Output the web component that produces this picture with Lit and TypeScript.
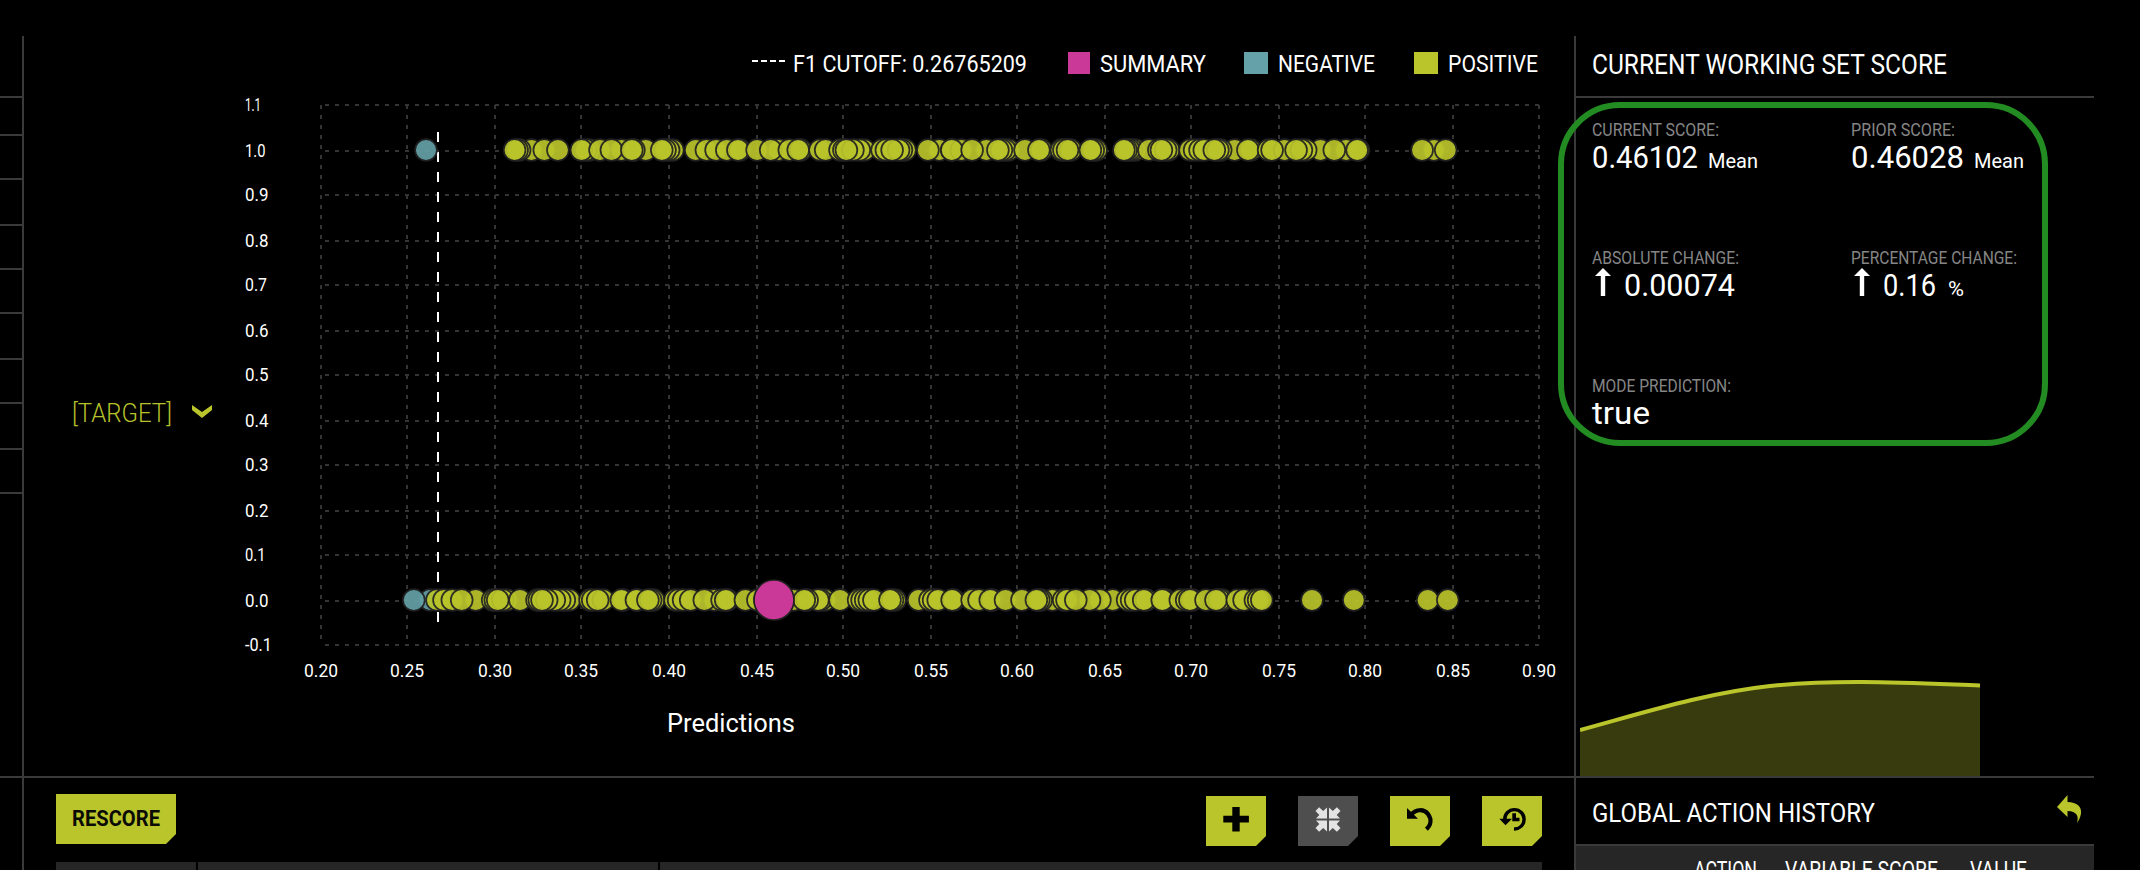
import { LitElement, html, svg, css } from "lit";
import { customElement } from "lit/decorators.js";

// Line of text condensed to an exact width; h is the cap height.
const line = (text: string, w: number, h: number, size: number, cls = "") => html`
  <svg class="line ${cls}" width=${w} height=${h}>
    <text x="-1" y=${h} font-size=${size} textLength=${w + 2} lengthAdjust="spacingAndGlyphs">${text}</text>
  </svg>`;

const COLS: [number, string][] = [
  [321, "0.20"], [407, "0.25"], [495, "0.30"], [581, "0.35"], [669, "0.40"],
  [757, "0.45"], [843, "0.50"], [931, "0.55"], [1017, "0.60"], [1105, "0.65"],
  [1191, "0.70"], [1279, "0.75"], [1365, "0.80"], [1453, "0.85"], [1539, "0.90"],
];
const ROWS: [number, string, number][] = [
  [105, "1.1", 16], [151, "1.0", 20.5], [195, "0.9", 23.5], [241, "0.8", 23.5],
  [285, "0.7", 22], [331, "0.6", 23.5], [375, "0.5", 23.5], [421, "0.4", 23.5],
  [465, "0.3", 23.5], [511, "0.2", 23.5], [555, "0.1", 20.5], [601, "0.0", 23.5],
  [645, "-0.1", 27],
];

// Marker centres, ordered back to front.
const at = (o: number, k: number, list: number[]) => list.map((v) => o + v / k);
const TOP = [
  ...at(400, 2.8, [368, 335, 328, 321, 404, 442, 530, 520, 508, 560, 620, 592, 688, 655, 649,
    764, 752, 742, 733, 828, 858, 885, 915, 952, 946, 1000, 1060, 1038, 1090, 1122, 1115,
    1176, 1192, 1300, 1286, 1232, 1243, 1268, 1250, 1350, 1362, 1414, 1404, 1396, 1378, 1510, 1478, 1545]),
  ...at(940, 2.8, [60, 33, 130, 90, 192, 182, 172, 162, 238, 284, 277, 340, 347, 366, 357, 437, 429, 421,
    547, 537, 529, 521, 515, 585, 613, 640, 632, 620, 700, 713, 728, 740, 825, 786, 778, 768, 870, 862, 920,
    965, 930, 1065, 1024, 1012, 997, 1137, 1104, 1172, 1168, 1383, 1350, 1416]),
];
const BOTTOM = [
  ...at(390, 3, [141, 162, 187, 257, 215, 308, 316, 350, 338, 323, 390, 441, 448, 538, 523, 509,
    493, 470, 456, 600, 608, 640, 623, 700, 694, 742]),
  ...at(390, 2.8, [690, 738, 730, 722, 798, 808, 822,
    842, 908, 880, 930, 945, 940, 995, 1030, 1050, 1100, 1130, 1218, 1205, 1198, 1168, 1160, 1260,
    1312, 1322, 1332, 1342, 1355, 1414, 1407, 1400, 1480, 1512, 1522, 1535]),
  ...at(940, 2.489, [34, 30, 80, 97, 130, 125, 163, 204, 280, 252, 246, 240, 308, 316, 430, 398,
    372, 338, 467, 477, 487, 514, 507, 562, 556, 553, 598, 614, 628, 622, 662, 703, 695, 687, 740,
    757, 785, 793, 801, 926, 1030, 1214, 1264]),
];

const dot = (x: number, y: number, cls = "pos", r = 10.9) =>
  svg`<circle class="dot ${cls}" cx=${x.toFixed(1)} cy=${y} r=${r}></circle>`;

@customElement("app-root")
export class AppRoot extends LitElement {
  static styles = css`
    :host { display: block; }
    * { box-sizing: border-box; }
    svg { display: block; flex: none; }
    .page {
      height: 870px; overflow: hidden; background: #000; color: #fff; padding-top: 36px;
      font-family: Roboto, "Liberation Sans", sans-serif;
      display: grid; grid-template-columns: 24px 1550px 520px;
      grid-template-rows: 740px 94px; align-content: start;
    }
    .line { overflow: visible; }
    text { fill: #fff; font-family: Roboto, "Liberation Sans", sans-serif; white-space: pre; }
    .dim text { fill: #858585; }
    .dark text { fill: #0b0b06; font-weight: 700; }
    .lime text { fill: #b7c22b; font-weight: 300; }
    .rail { border-right: 2px solid #3a3a3a; display: flex; flex-direction: column; }
    .rail i { border-bottom: 2px solid #3a3a3a; flex: none; display: block; }
    .foot { border-top: 2px solid #3a3a3a; }
    .upper { display: flex; flex-direction: column; }
    .legend { height: 52px; padding: 16px 37px 0 0; display: flex; justify-content: flex-end; gap: 40px; }
    .item { display: flex; align-items: center; gap: 11px; height: 22px; }
    .item.f1 { margin-right: 2px; }
    .item.sum { margin-right: -1px; }
    .swatch { width: 24px; height: 22px; background: #bac52b; }
    .swatch.sum { background: #ca3997; width: 22px; }
    .swatch.neg { background: #65a1a8; }
    .dash { stroke: #fff; stroke-width: 2; stroke-dasharray: 6 3; margin-bottom: 4px; margin-right: -2px; }
    .body { display: flex; }
    .target { width: 200px; height: 688px; padding: 316px 0 0 49px; display: flex; gap: 21px; }
    .chev { margin-top: 1px; fill: #bac52b; }
    .grid { stroke: #343434; stroke-width: 2; stroke-dasharray: 4 6; }
    .cut { stroke: #fff; stroke-width: 2; stroke-dasharray: 10 10; }
    .dot { stroke: #222; stroke-width: 1.7; opacity: 0.92; }
    .pos { fill: #bac52b; }
    .neg { fill: #65a1a8; }
    .mean { fill: #ca3997; opacity: 1; }
    .side { border-left: 2px solid #3a3a3a; position: relative; display: flex; flex-direction: column; }
    .head { height: 62px; flex: none; padding: 19px 0 0 17px; border-bottom: 2px solid #3a3a3a; }
    .scores { display: grid; grid-template-columns: 259px 259px; grid-auto-rows: 128px; padding: 26px 0 0 17px; }
    .cell { display: flex; flex-direction: column; gap: 9px; }
    .value { display: flex; align-items: flex-end; height: 23px; gap: 12px; }
    .value.delta { gap: 14px; padding-left: 2px; }
    .arrow { fill: #fff; }
    .ring { position: absolute; left: -18px; top: 66px; width: 490px; height: 344px; border: 6px solid #228b22; border-radius: 62px; }
    .area { margin: auto 0 -2px 4px; position: relative; }
    .fill { fill: #bac52b; opacity: 0.3; }
    .curve { fill: none; stroke: #bac52b; stroke-width: 4; }
    .tools { height: 84px; padding: 0 32px; display: flex; justify-content: space-between; }
    .btn {
      background: #bac52b; width: 60px; height: 50px; margin-top: 18px;
      clip-path: polygon(0 0, 100% 0, 100% 40px, calc(100% - 10px) 100%, 0 100%);
    }
    .btn.wide { width: 120px; margin-top: 16px; padding: 16px 0 0 17px; }
    .btn.off { background: #4e4e4e; }
    .group { display: flex; gap: 32px; }
    .table { display: flex; gap: 2px; padding: 0 32px; height: 8px; }
    .table b { background: #262626; width: 140px; }
    .table b + b { width: 460px; }
    .table b + b + b { width: 882px; }
    .hist { height: 68px; padding: 26px 12px 0 17px; display: flex; justify-content: space-between; border-bottom: 2px solid #3a3a3a; }
    .back { fill: #bac52b; margin-top: -9px; }
    .cols { height: 24px; background: #262626; padding: 15px 0 0 119px; display: flex; gap: 30px; overflow: hidden; }
    .cols .last { margin-left: 4px; }
    .white { fill: #e3e3e3; }
    .bend { fill: none; stroke: #000; }
  `;

  render() {
    const gaps = [60, 36, 42, 44, 42, 42, 44, 42, 44, 42];
    return html`
      <div class="page">
        <div class="rail">${gaps.map((g) => html`<i style="height:${g + 2}px"></i>`)}</div>
        <div class="upper">
          <div class="legend">
            <div class="item f1">
              <svg class="dash" width="33" height="2"><line x1="0" y1="1" x2="33" y2="1"></line></svg>
              ${line("F1 CUTOFF: 0.26765209", 232, 17, 23.8)}
            </div>
            <div class="item sum"><span class="swatch sum"></span>${line("SUMMARY", 104, 17, 23.8)}</div>
            <div class="item"><span class="swatch neg"></span>${line("NEGATIVE", 95, 17, 23.8)}</div>
            <div class="item"><span class="swatch"></span>${line("POSITIVE", 88, 17, 23.8)}</div>
          </div>
          <div class="body">
            <div class="target">
              ${line("[TARGET]", 98, 18, 25.5, "lime")}
              <svg class="chev" width="20" height="13"><path d="M0 0L10 7L20 0V5L10 13L0 5Z"></path></svg>
            </div>
            <svg width="1350" height="688" viewBox="224 88 1350 688">
              ${ROWS.map(([y]) => svg`<line class="grid" x1="325" x2="1540" y1=${y} y2=${y}></line>`)}
              ${COLS.map(([x]) => svg`<line class="grid" x1=${x} x2=${x} y1="105" y2="645"></line>`)}
              ${ROWS.map(([y, s, w]) => svg`<text x="245" y=${y + 6} font-size="18.5" textLength=${w} lengthAdjust="spacingAndGlyphs">${s}</text>`)}
              ${COLS.map(([x, s]) => svg`<text x=${x - 17} y="677" font-size="18.5" textLength="34" lengthAdjust="spacingAndGlyphs">${s}</text>`)}
              <text x="667" y="731.5" font-size="26" textLength="128" lengthAdjust="spacingAndGlyphs">Predictions</text>
              <line class="cut" x1="438" x2="438" y1="132" y2="622"></line>
              ${dot(426, 150, "neg")}
              ${dot(430, 600, "neg")}${dot(413.8, 600, "neg")}
              ${TOP.map((x) => dot(x, 150))}
              ${BOTTOM.map((x) => dot(x, 600))}
              ${dot(774, 600, "mean", 20)}
            </svg>
          </div>
        </div>
        <div class="side">
          <div class="head">${line("CURRENT WORKING SET SCORE", 353, 19, 27)}</div>
          <div class="scores">
            <div class="cell">
              ${line("CURRENT SCORE:", 125, 12, 17.5, "dim")}
              <div class="value">${line("0.46102", 104, 23, 31.5)}${line("Mean", 48, 23, 20)}</div>
            </div>
            <div class="cell">
              ${line("PRIOR SCORE:", 102, 12, 17.5, "dim")}
              <div class="value">${line("0.46028", 111, 23, 31.5)}${line("Mean", 48, 23, 20)}</div>
            </div>
            <div class="cell">
              ${line("ABSOLUTE CHANGE:", 145, 12, 17.5, "dim")}
              <div class="value delta">${this.arrow()}${line("0.00074", 109, 23, 31.5)}</div>
            </div>
            <div class="cell">
              ${line("PERCENTAGE CHANGE:", 164, 12, 17.5, "dim")}
              <div class="value delta">${this.arrow()}${line("0.16", 51, 23, 31.5)}${line("%", 14, 23, 20)}</div>
            </div>
            <div class="cell">
              ${line("MODE PREDICTION:", 137, 12, 17.5, "dim")}
              <div class="value">${line("true", 56, 23, 32)}</div>
            </div>
          </div>
          <svg class="area" width="400" height="100">
            <path class="fill" d="M0 52C66 34 126 15 190 8C260 1 330 5 400 7.5V100H0Z"></path>
            <path class="curve" d="M0 52C66 34 126 15 190 8C260 1 330 5 400 7.5"></path>
          </svg>
          <div class="ring"></div>
        </div>

        <div class="rail foot"></div>
        <div class="foot">
          <div class="tools">
            <div class="btn wide">${line("RESCORE", 86, 16, 22.5, "dark")}</div>
            <div class="group">
              <div class="btn"><svg width="60" height="50">
                <path d="M26.3 11h7.4v8.8h9.2v6.6h-9.2v9h-7.4v-9h-9v-6.6h9z"></path>
              </svg></div>
              <div class="btn off"><svg class="white" width="60" height="50">
                ${[[1, 1], [-1, 1], [1, -1], [-1, -1]].map(([a, b]) => svg`
                  <path transform="translate(30 23.5) scale(${a} ${b})" d="M1 1H12L8.7 4.5L12.5 8.6L8.9 12.2L4.8 8.4L1 12Z"></path>`)}
              </svg></div>
              <div class="btn"><svg width="60" height="50">
                <path d="M17 12V22.7H28Z"></path>
                <path class="bend" stroke-width="4.2" d="M21.5 18.4C26 13 34 12.8 38 18C42 23.5 41 29 36.4 33.2"></path>
              </svg></div>
              <div class="btn"><svg width="60" height="50">
                <path d="M17.3 22.8H30L23.5 29.3Z"></path>
                <path class="bend" stroke-width="3.4" d="M22.7 23.5A9.7 9.7 0 1 1 32 33"></path>
                <path d="M30.3 17.3H34V21.8H37.5V25.2H30.3Z"></path>
              </svg></div>
            </div>
          </div>
          <div class="table"><b></b><b></b><b></b></div>
        </div>
        <div class="side foot">
          <div class="hist">
            ${line("GLOBAL ACTION HISTORY", 281, 18, 26)}
            <svg class="back" width="25" height="28">
              <path d="M0 12L10.5 0V7C20 7 25 12 24 18.5C23.5 22 22 25 20 28C22 21 20 16.5 10.5 16V22Z"></path>
            </svg>
          </div>
          <div class="cols">
            ${line("ACTION", 61, 17, 23.5)}${line("VARIABLE SCORE", 151, 17, 23.5)}${line("VALUE", 55, 17, 23.5, "last")}
          </div>
        </div>
      </div>`;
  }

  private arrow() {
    return html`<svg class="arrow" width="16" height="28"><path d="M8 0L16 8H10.2V28H5.8V8H0Z"></path></svg>`;
  }
}
